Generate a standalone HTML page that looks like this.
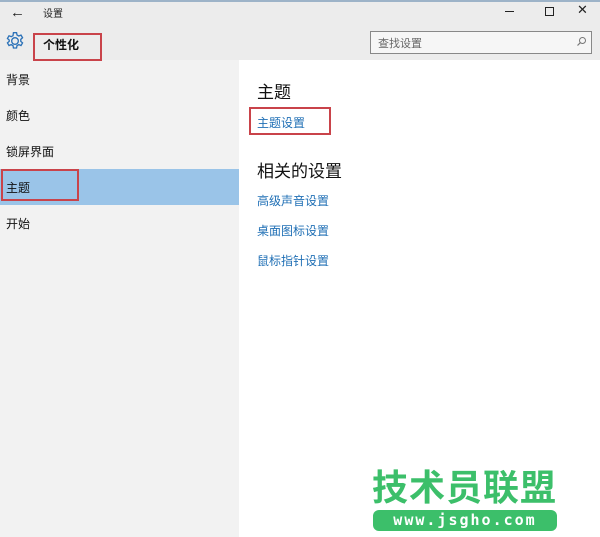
<!DOCTYPE html>
<html><head><meta charset="utf-8"><style>
body{margin:0;width:600px;height:537px;position:relative;overflow:hidden;background:#fff;font-family:"Liberation Sans","Noto Sans CJK SC",sans-serif;}
.a{position:absolute;}
.top{left:0;top:0;width:600px;height:60px;background:#ececec;border-top:2px solid #9db3c8;box-sizing:border-box;}
.left{left:0;top:60px;width:239px;height:477px;background:#f2f2f2;}
.item{left:6px;font-size:12px;color:#111;}
.link{left:257px;font-size:12px;color:#1f6fb5;}
.red{border:2px solid #c9434a;box-sizing:border-box;}
</style></head><body>
<div class="a top"></div>
<div class="a left"></div>
<div class="a" style="left:10px;top:4px;font-size:15px;color:#222">←</div>
<div class="a" style="left:43px;top:5px;font-size:10px;color:#222">设置</div>
<div class="a" style="left:505px;top:11px;width:9px;height:1px;background:#222"></div>
<div class="a" style="left:545px;top:7px;width:7px;height:7px;border:1px solid #222"></div>
<div class="a" style="left:577px;top:2px;font-size:13px;color:#222">✕</div>
<svg class="a" style="left:5px;top:31px" width="20" height="20" viewBox="0 0 18 18"><g fill="none" stroke="#2c72b8" stroke-width="1.2"><circle cx="9" cy="9" r="3"/><path d="M7.6 1.5h2.8l.4 2.1 1.6.9 2-.8 1.4 2.4-1.6 1.4v1.8l1.6 1.4-1.4 2.4-2-.8-1.6.9-.4 2.1H7.6l-.4-2.1-1.6-.9-2 .8-1.4-2.4 1.6-1.4V8.1L2.2 6.7l1.4-2.4 2 .8 1.6-.9z"/></g></svg>
<div class="a red" style="left:33px;top:33px;width:69px;height:28px"></div>
<div class="a" style="left:43px;top:36px;font-size:12px;font-weight:bold;color:#111">个性化</div>
<div class="a" style="left:370px;top:31px;width:222px;height:23px;border:1px solid #888;background:#f6f6f6;box-sizing:border-box"></div>
<div class="a" style="left:378px;top:35px;font-size:11px;color:#666">查找设置</div>
<svg class="a" style="left:576px;top:36px" width="11" height="11" viewBox="0 0 11 11"><circle cx="6.5" cy="4.5" r="3" fill="none" stroke="#777"/><path d="M4.3 6.7L1.5 9.5" stroke="#777" stroke-width="1.2"/></svg>
<div class="a item" style="top:71px">背景</div>
<div class="a item" style="top:107px">颜色</div>
<div class="a item" style="top:143px">锁屏界面</div>
<div class="a" style="left:0;top:169px;width:239px;height:36px;background:#9ac4e8"></div>
<div class="a red" style="left:1px;top:169px;width:78px;height:32px"></div>
<div class="a item" style="top:179px">主题</div>
<div class="a item" style="top:215px">开始</div>
<div class="a" style="left:257px;top:78px;font-size:17px;color:#111">主题</div>
<div class="a red" style="left:249px;top:107px;width:82px;height:28px"></div>
<div class="a link" style="top:114px">主题设置</div>
<div class="a" style="left:257px;top:157px;font-size:17px;color:#111">相关的设置</div>
<div class="a link" style="top:192px">高级声音设置</div>
<div class="a link" style="top:222px">桌面图标设置</div>
<div class="a link" style="top:252px">鼠标指针设置</div>
<div class="a" style="left:372px;top:466px;font-size:36px;font-weight:bold;color:#3cbf6a;letter-spacing:1px;line-height:44px">技术员联盟</div>
<div class="a" style="left:373px;top:510px;width:184px;height:21px;border-radius:6px;background:#3cbf6a;color:#fff;font-size:15px;font-weight:bold;text-align:center;line-height:21px;letter-spacing:2px;font-family:'DejaVu Sans Mono',monospace">www.jsgho.com</div>
</body></html>
